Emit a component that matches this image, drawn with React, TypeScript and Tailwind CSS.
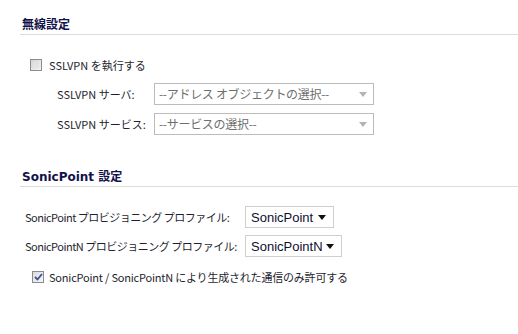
const label =
  "font-['Noto_Sans_CJK_JP',sans-serif] text-[11px] text-[#1e1e2e] leading-none whitespace-nowrap shrink-0";
const heading =
  "h-[19px] border-b border-[#dcdcdc] pl-[2px] flex items-center font-['DejaVu_Sans','Noto_Sans_CJK_JP',sans-serif] font-bold text-[12px] text-[#12124a]";

function DisabledSelect({ text }: { text: string }) {
  return (
    <div className="shrink-0 w-[220px] h-[22px] border border-[#bcbcbc] bg-white flex items-center pl-[4px] pr-[6px]">
      <span className="flex-1 font-['Noto_Sans_CJK_JP',sans-serif] text-[12px] tracking-[-0.3px] text-[#6e6e6e] leading-none whitespace-nowrap">
        {text}
      </span>
      <svg width="8" height="5" viewBox="0 0 8 5">
        <path d="M0 0 L8 0 L4 5 Z" fill="#b4b4b4" />
      </svg>
    </div>
  );
}

function ProfileSelect({ text, width }: { text: string; width: string }) {
  return (
    <div className={`${width} shrink-0 h-[22px] border border-[#cfcfcf] bg-white flex items-center pl-[5px] pr-[7px]`}>
      <span className="flex-1 font-['Liberation_Sans',Arial,sans-serif] text-[13px] text-[#0e0e30] leading-none">{text}</span>
      <svg width="8" height="5" viewBox="0 0 8 5">
        <path d="M0 0 L8 0 L4 5 Z" fill="#111111" />
      </svg>
    </div>
  );
}

export default function App() {
  return (
    <div className="w-[518px] h-[334px] bg-white pl-[20px] pt-[16px]">
      {/* wireless section */}
      <div className={heading}>無線設定</div>

      <div className="mt-[24px] h-[12px] flex items-center ml-[10px]">
        <div className="w-[12px] h-[12px] border border-[#8c8c8c] bg-gradient-to-br from-[#d4d4d4] to-[#f4f4f4] p-[2px]">
          <div className="w-full h-full bg-[#e2e2e2]" />
        </div>
        <span className={`${label} ml-[7px]`}>SSLVPN を執行する</span>
      </div>

      <div className="mt-[12px] flex items-center ml-[37px]">
        <span className={`${label} w-[97px]`}>SSLVPN サーバ:</span>
        <DisabledSelect text="--アドレス オブジェクトの選択--" />
      </div>
      <div className="mt-[8px] flex items-center ml-[37px]">
        <span className={`${label} w-[97px]`}>SSLVPN サービス:</span>
        <DisabledSelect text="--サービスの選択--" />
      </div>

      {/* sonicpoint section */}
      <div className="mt-[33px]">
        <div className={`${heading} h-[18px]`}>SonicPoint 設定</div>
      </div>

      <div className="mt-[19px] flex items-center ml-[5px]">
        <span className={`${label} w-[220px] tracking-[-0.5px]`}>SonicPoint プロビジョニング プロファイル:</span>
        <ProfileSelect text="SonicPoint" width="w-[89px]" />
      </div>
      <div className="mt-[7px] flex items-center ml-[5px]">
        <span className={`${label} w-[220px] tracking-[-0.5px]`}>SonicPointN プロビジョニング プロファイル:</span>
        <ProfileSelect text="SonicPointN" width="w-[97px]" />
      </div>

      <div className="mt-[14px] h-[12px] flex items-center ml-[12px]">
        <div className="w-[12px] h-[12px] border border-[#8c8c8c] bg-gradient-to-br from-[#dcdcdc] to-[#f6f6f6] flex items-center justify-center">
          <svg width="9" height="8" viewBox="0 0 9 8">
            <path d="M1 4 L3.5 6.5 L8 1" stroke="#3a4fa0" strokeWidth="1.8" fill="none" />
          </svg>
        </div>
        <span className={`${label} ml-[5px] tracking-[-0.2px]`}>
          SonicPoint / SonicPointN により生成された通信のみ許可する
        </span>
      </div>
    </div>
  );
}
